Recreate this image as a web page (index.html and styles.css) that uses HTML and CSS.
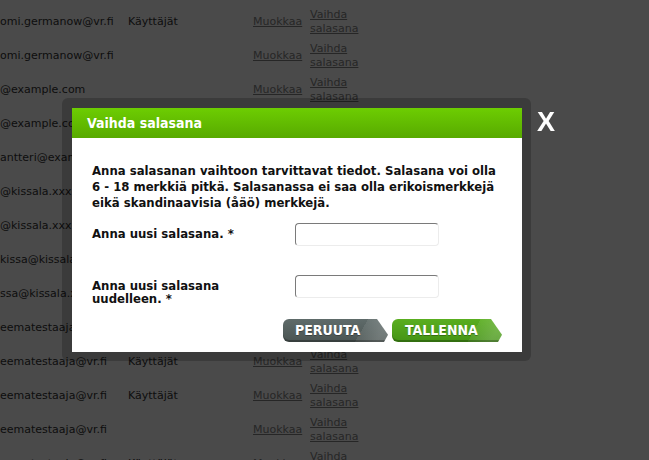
FILE: index.html
```html
<!DOCTYPE html>
<html lang="fi">
<head>
  <meta charset="UTF-8">
  <meta name="viewport" content="width=device-width, initial-scale=1.0">
  <title>Käyttäjät</title>
  <link rel="stylesheet" href="styles.css">
</head>
<body>
  <table class="users">
    <colgroup>
      <col class="col-email">
      <col class="col-group">
      <col class="col-edit">
      <col class="col-pass">
    </colgroup>
    <tbody>
      <tr><td>omi.germanow@vr.fi</td><td>Käyttäjät</td><td><a href="#">Muokkaa</a></td><td><a href="#">Vaihda salasana</a></td></tr>
      <tr><td>omi.germanow@vr.fi</td><td>Käyttäjät</td><td><a href="#">Muokkaa</a></td><td><a href="#">Vaihda salasana</a></td></tr>
      <tr><td>omi.germanow@vr.fi</td><td></td><td><a href="#">Muokkaa</a></td><td><a href="#">Vaihda salasana</a></td></tr>
      <tr><td>@example.com</td><td></td><td><a href="#">Muokkaa</a></td><td><a href="#">Vaihda salasana</a></td></tr>
      <tr><td>@example.com</td><td>Käyttäjät</td><td><a href="#">Muokkaa</a></td><td><a href="#">Vaihda salasana</a></td></tr>
      <tr><td>antteri@example.com</td><td>Käyttäjät</td><td><a href="#">Muokkaa</a></td><td><a href="#">Vaihda salasana</a></td></tr>
      <tr><td>@kissala.xxx</td><td>Käyttäjät</td><td><a href="#">Muokkaa</a></td><td><a href="#">Vaihda salasana</a></td></tr>
      <tr><td>@kissala.xxx</td><td></td><td><a href="#">Muokkaa</a></td><td><a href="#">Vaihda salasana</a></td></tr>
      <tr><td>kissa@kissala.xxx</td><td>Käyttäjät</td><td><a href="#">Muokkaa</a></td><td><a href="#">Vaihda salasana</a></td></tr>
      <tr><td>ssa@kissala.xxx</td><td></td><td><a href="#">Muokkaa</a></td><td><a href="#">Vaihda salasana</a></td></tr>
      <tr><td>eematestaaja@vr.fi</td><td></td><td><a href="#">Muokkaa</a></td><td><a href="#">Vaihda salasana</a></td></tr>
      <tr><td>eematestaaja@vr.fi</td><td>Käyttäjät</td><td><a href="#">Muokkaa</a></td><td><a href="#">Vaihda salasana</a></td></tr>
      <tr><td>eematestaaja@vr.fi</td><td>Käyttäjät</td><td><a href="#">Muokkaa</a></td><td><a href="#">Vaihda salasana</a></td></tr>
      <tr><td>eematestaaja@vr.fi</td><td></td><td><a href="#">Muokkaa</a></td><td><a href="#">Vaihda salasana</a></td></tr>
      <tr><td>eematestaaja@vr.fi</td><td>Käyttäjät</td><td><a href="#">Muokkaa</a></td><td><a href="#">Vaihda salasana</a></td></tr>
    </tbody>
  </table>

  <div class="overlay"></div>

  <div class="modal">
    <div class="modal-head">Vaihda salasana</div>
    <form class="modal-body">
      <p class="intro">Anna salasanan vaihtoon tarvittavat tiedot. Salasana voi olla 6 - 18 merkkiä pitkä. Salasanassa ei saa olla erikoismerkkejä eikä skandinaavisia (åäö) merkkejä.</p>
      <div class="field">
        <label for="pw1">Anna uusi salasana. *</label>
        <input id="pw1" type="password">
      </div>
      <div class="field">
        <label for="pw2">Anna uusi salasana uudelleen. *</label>
        <input id="pw2" type="password">
      </div>
      <div class="actions">
        <button type="button" class="btn btn-cancel">Peruuta</button>
        <button type="submit" class="btn btn-save">Tallenna</button>
      </div>
    </form>
    <a href="#" class="close">X</a>
  </div>
</body>
</html>
```

FILE: styles.css
```css
body {
  margin: 0;
  background-color: #FFFFFF;
  font-family: "DejaVu Sans", Verdana, sans-serif;
  font-size: 11px;
  color: #333333;
  overflow: hidden;
}

/* user list behind the dialog */
.users {
  margin-top: -29px;
  width: 364px;
  border-collapse: collapse;
  table-layout: fixed;
}

.col-email { width: 128px; }
.col-group { width: 125px; }
.col-edit { width: 57px; }
.col-pass { width: 54px; }

.users td {
  height: 34px;
  padding: 0;
  line-height: 14px;
  vertical-align: middle;
  white-space: nowrap;
  overflow: hidden;
}

.users td:last-child {
  white-space: normal;
  overflow: visible;
}

.users a {
  color: #858585;
}

.overlay {
  position: fixed;
  inset: 0;
  background-color: rgba(0, 0, 0, 0.71);
}

/* dialog */
.modal {
  position: absolute;
  left: 62px;
  top: 98px;
  width: 469px;
  height: 263px;
  box-sizing: border-box;
  padding: 10px 9px 9px 10px;
  background-color: rgba(0, 0, 0, 0.2);
  border-radius: 6px;
  display: flex;
  flex-direction: column;
}

.modal-head {
  height: 30px;
  line-height: 30px;
  padding-left: 15px;
  background: linear-gradient(#6dcd02, #58aa00);
  color: #FFFFFF;
  font-family: "DejaVu Sans Condensed", "DejaVu Sans", sans-serif;
  font-weight: bold;
  font-size: 14px;
}

.modal-body {
  flex: 1;
  margin: 0;
  padding: 25px 20px 9px 20px;
  background-color: #FFFFFF;
  color: #111111;
  font-family: "DejaVu Sans Condensed", "DejaVu Sans", sans-serif;
  font-weight: bold;
  font-size: 13px;
  display: flex;
  flex-direction: column;
}

.intro {
  margin: 0 0 12px;
  line-height: 16px;
}

.field {
  display: grid;
  grid-template-columns: 203px 144px;
  align-items: start;
  height: 52px;
}

.field label {
  width: 170px;
  padding-top: 4px;
  line-height: 13px;
}

.field input {
  box-sizing: border-box;
  width: 144px;
  height: 23px;
  margin: 0;
  border: 1px solid;
  border-color: #7a7a7a #ececec #ececec #7a7a7a;
  border-radius: 4px;
  background-color: #FFFFFF;
}

.actions {
  display: flex;
  justify-content: flex-end;
  gap: 4px;
  margin-top: -8px;
}

.btn {
  height: 23px;
  padding: 0 0 0 12px;
  border: none;
  border-radius: 6px 0 0 6px;
  clip-path: polygon(0 0, calc(100% - 11px) 0, 100% 68%, calc(100% - 4px) 100%, 0 100%);
  color: #FFFFFF;
  font-family: "DejaVu Sans Condensed", "DejaVu Sans", sans-serif;
  font-weight: bold;
  font-size: 14px;
  text-transform: uppercase;
  text-align: left;
  line-height: 23px;
  text-shadow: 0 1px 0 rgba(0, 0, 0, 0.3);
  box-shadow: inset 0 -2px 0 rgba(0, 0, 0, 0.25);
  cursor: pointer;
}

.btn-cancel {
  width: 105px;
  background:
    linear-gradient(120deg, transparent 72%, rgba(255, 255, 255, 0.08) 72%, rgba(255, 255, 255, 0.2) 90%),
    linear-gradient(#5f6b6a, #4a5452);
}

.btn-save {
  width: 110px;
  padding-left: 13px;
  background:
    linear-gradient(120deg, transparent 72%, rgba(255, 255, 255, 0.08) 72%, rgba(255, 255, 255, 0.2) 90%),
    linear-gradient(#5aae20, #449315);
}

.close {
  position: absolute;
  left: 475px;
  top: 11px;
  color: #FFFFFF;
  font-family: "Liberation Sans", Arial, sans-serif;
  font-weight: bold;
  font-size: 27px;
  line-height: 27px;
  text-decoration: none;
}
```
